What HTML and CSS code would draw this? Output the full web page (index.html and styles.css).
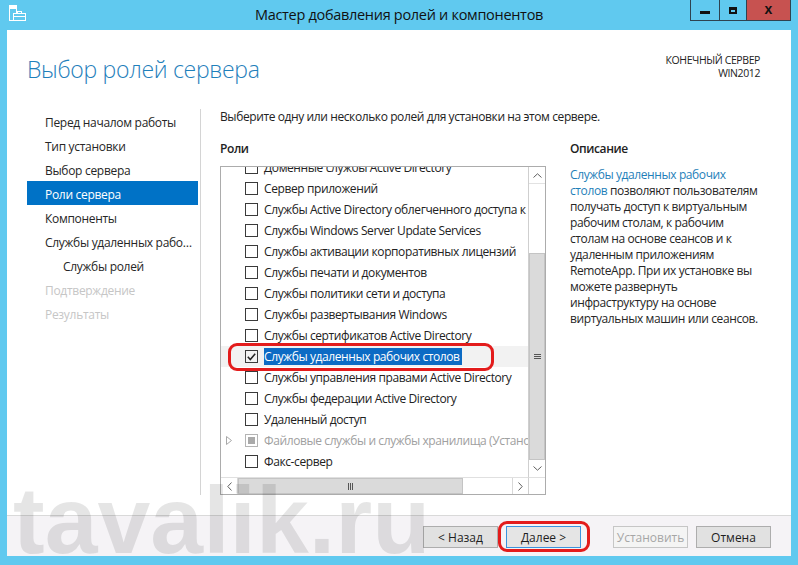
FILE: index.html
```html
<!DOCTYPE html>
<html>
<head>
    <meta charset="utf-8">
    <link rel="stylesheet" href="styles.css">
</head>
<body>
    <div class="window">
        <div class="titlebar">
            <svg class="app-icon" width="17" height="17" viewBox="0 0 17 17">
                <rect x="0.5" y="0.5" width="7" height="15" fill="none" stroke="#fff"/>
                <rect x="1" y="1" width="6" height="3" fill="#fff"/>
                <rect x="4.5" y="8.5" width="12" height="7" fill="#60c9ef" stroke="#fff"/>
                <rect x="8.5" y="6.5" width="4" height="2" fill="none" stroke="#fff"/>
                <line x1="4.5" y1="11.5" x2="16.5" y2="11.5" stroke="#fff"/>
            </svg>
            <div class="title">Мастер добавления ролей и компонентов</div>
            <div class="winbtns">
                <span class="wb wb-min"><i></i></span>
                <span class="wb wb-max"><i></i></span>
                <span class="wb wb-close">x</span>
            </div>
        </div>

        <div class="content">
            <div class="header">
                <h1>Выбор ролей сервера</h1>
                <div class="target">КОНЕЧНЫЙ СЕРВЕР<br>WIN2012</div>
            </div>

            <div class="body">
                <ul class="nav">
                    <li>Перед началом работы</li>
                    <li>Тип установки</li>
                    <li>Выбор сервера</li>
                    <li class="active">Роли сервера</li>
                    <li>Компоненты</li>
                    <li>Службы удаленных рабочих столов</li>
                    <li class="sub">Службы ролей</li>
                    <li class="off">Подтверждение</li>
                    <li class="off">Результаты</li>
                </ul>

                <div class="main">
                    <p class="intro">Выберите одну или несколько ролей для установки на этом сервере.</p>
                    <div class="columns">
                        <div class="roles">
                            <h2>Роли</h2>
                            <div class="listbox">
                                <div class="items">
                                    <div class="inner">
                                        <div class="row"><span class="exp"></span><span class="cb"></span><span class="label">Доменные службы Active Directory</span></div>
                                        <div class="row"><span class="exp"></span><span class="cb"></span><span class="label">Сервер приложений</span></div>
                                        <div class="row"><span class="exp"></span><span class="cb"></span><span class="label">Службы Active Directory облегченного доступа к каталогам</span></div>
                                        <div class="row"><span class="exp"></span><span class="cb"></span><span class="label">Службы Windows Server Update Services</span></div>
                                        <div class="row"><span class="exp"></span><span class="cb"></span><span class="label">Службы активации корпоративных лицензий</span></div>
                                        <div class="row"><span class="exp"></span><span class="cb"></span><span class="label">Службы печати и документов</span></div>
                                        <div class="row"><span class="exp"></span><span class="cb"></span><span class="label">Службы политики сети и доступа</span></div>
                                        <div class="row"><span class="exp"></span><span class="cb"></span><span class="label">Службы развертывания Windows</span></div>
                                        <div class="row"><span class="exp"></span><span class="cb"></span><span class="label">Службы сертификатов Active Directory</span></div>
                                        <div class="row sel"><span class="exp"></span><span class="cb"><svg width="9" height="8" viewBox="0 0 9 8"><polyline points="0.8,3.8 3.3,6.6 8.2,0.8" fill="none" stroke="#222" stroke-width="1.5"/></svg></span><span class="label">Службы удаленных рабочих столов</span></div>
                                        <div class="row"><span class="exp"></span><span class="cb"></span><span class="label">Службы управления правами Active Directory</span></div>
                                        <div class="row"><span class="exp"></span><span class="cb"></span><span class="label">Службы федерации Active Directory</span></div>
                                        <div class="row"><span class="exp"></span><span class="cb"></span><span class="label">Удаленный доступ</span></div>
                                        <div class="row dim"><span class="exp"><svg width="6" height="9" viewBox="0 0 6 9"><polygon points="0.5,0.5 5.5,4.5 0.5,8.5" fill="none" stroke="#a8a8a8"/></svg></span><span class="cb part"></span><span class="label">Файловые службы и службы хранилища (Установлено 1 из 12)</span></div>
                                        <div class="row"><span class="exp"></span><span class="cb"></span><span class="label">Факс-сервер</span></div>
                                    </div>
                                </div>
                                <div class="vscroll">
                                    <span class="arrow"><svg width="9" height="5" viewBox="0 0 9 5"><polyline points="0.5,4.5 4.5,0.8 8.5,4.5" fill="none" stroke="#606060"/></svg></span>
                                    <span class="vthumb"><svg width="7" height="5" viewBox="0 0 7 5"><path d="M0 0.5H7M0 2.5H7M0 4.5H7" stroke="#555"/></svg></span>
                                    <span class="arrow"><svg width="9" height="5" viewBox="0 0 9 5"><polyline points="0.5,0.5 4.5,4.2 8.5,0.5" fill="none" stroke="#606060"/></svg></span>
                                </div>
                                <div class="hscroll">
                                    <span class="arrow"><svg width="5" height="9" viewBox="0 0 5 9"><polyline points="4.5,0.5 0.8,4.5 4.5,8.5" fill="none" stroke="#606060"/></svg></span>
                                    <span class="hthumb"><svg width="5" height="7" viewBox="0 0 5 7"><path d="M0.5 0V7M2.5 0V7M4.5 0V7" stroke="#555"/></svg></span>
                                    <span class="track"></span>
                                    <span class="arrow"><svg width="5" height="9" viewBox="0 0 5 9"><polyline points="0.5,0.5 4.2,4.5 0.5,8.5" fill="none" stroke="#606060"/></svg></span>
                                </div>
                                <div class="corner"></div>
                            </div>
                        </div>
                        <div class="desc">
                            <h2>Описание</h2>
                            <p><span class="link">Службы удаленных рабочих<br>столов</span> позволяют пользователям<br>получать доступ к виртуальным<br>рабочим столам, к рабочим<br>столам на основе сеансов и к<br>удаленным приложениям<br>RemoteApp. При их установке вы<br>можете развернуть<br>инфраструктуру на основе<br>виртуальных машин или сеансов.</p>
                        </div>
                    </div>
                </div>
            </div>

            <div class="footer">
                <button class="btn">&lt; Назад</button>
                <button class="btn primary">Далее &gt;</button>
                <button class="btn install" disabled>Установить</button>
                <button class="btn">Отмена</button>
            </div>

            <div class="watermark">tavalik.ru</div>
        </div>
    </div>
</body>
</html>
```

FILE: styles.css
```css
body {
    margin: 0;
    font-family: "Open Sans", "Noto Sans", sans-serif;
    color: #222;
}

.window {
    width: 798px;
    height: 565px;
    box-sizing: border-box;
    padding: 0 7px 9px;
    background: #60c9ef;
    display: flex;
    flex-direction: column;
}

/* title bar */
.titlebar {
    height: 30px;
    flex: none;
    display: grid;
    grid-template-columns: 1fr auto 1fr;
    align-items: start;
}
.app-icon {
    margin: 5px 0 0 2px;
}
.title {
    font-size: 14.5px;
    letter-spacing: -0.3px;
    line-height: 30px;
    color: #111;
}
.winbtns {
    justify-self: end;
    display: flex;
    border: 1px solid #2e4350;
    border-top: none;
}
.wb {
    height: 20px;
    display: flex;
    align-items: center;
    justify-content: center;
}
.wb-min {
    width: 28px;
    border-right: 1px solid #2e4350;
}
.wb-min i {
    width: 10px;
    height: 3px;
    margin-top: 5px;
    background: #111;
}
.wb-max {
    width: 26px;
    border-right: 1px solid #2e4350;
}
.wb-max i {
    width: 8px;
    height: 7px;
    box-sizing: border-box;
    border: 2px solid #111;
    border-top-width: 3px;
}
.wb-close {
    width: 43px;
    background: #c75250;
    font: bold 14px/20px "Liberation Sans", sans-serif;
    color: #111;
    padding-bottom: 3px;
    box-sizing: border-box;
}

/* white area */
.content {
    flex: 1;
    background: #fff;
    position: relative;
    display: flex;
    flex-direction: column;
    overflow: hidden;
}
.header {
    height: 78px;
    flex: none;
    box-sizing: border-box;
    padding: 23px 31px 0 20px;
    display: flex;
    justify-content: space-between;
    align-items: flex-start;
}
h1 {
    margin: 0;
    font-size: 23px;
    font-weight: 300;
    letter-spacing: -0.3px;
    line-height: 32px;
    color: #1f80bb;
}
.target {
    margin-top: 1px;
    font-size: 10.5px;
    letter-spacing: -0.4px;
    line-height: 13px;
    text-align: right;
    color: #222;
}

.body {
    flex: 1;
    display: flex;
    padding: 1px 0 20px;
    min-height: 0;
}

/* steps on the left */
.nav {
    list-style: none;
    margin: 0;
    padding: 0 2px 0 20px;
    width: 194px;
    box-sizing: border-box;
    border-right: 1px solid #d4d4d4;
    font-size: 12px;
    letter-spacing: -0.3px;
}
.nav li {
    height: 24px;
    box-sizing: border-box;
    padding: 2px 0 0 18px;
    line-height: 24px;
    white-space: nowrap;
    overflow: hidden;
    text-overflow: ellipsis;
    color: #262626;
}
.nav li.sub {
    padding-left: 36px;
}
.nav li.active {
    background: #0072c6;
    color: #fff;
}
.nav li.off {
    color: #c6c6c6;
}

.main {
    flex: 1;
    padding-left: 19px;
    font-size: 12px;
    letter-spacing: -0.4px;
}
.intro {
    margin: 0 0 16px;
    line-height: 16px;
}
.columns {
    display: flex;
}
h2 {
    margin: 0;
    font-size: 12px;
    font-weight: 600;
    line-height: 16px;
    color: #222;
}
.roles {
    width: 326px;
}
.roles h2 {
    margin-bottom: 9px;
}

/* roles list */
.listbox {
    width: 326px;
    height: 329px;
    box-sizing: border-box;
    border: 1px solid #acacac;
    display: grid;
    grid-template-columns: 1fr 17px;
    grid-template-rows: 1fr 17px;
}
.items {
    overflow: hidden;
}
.inner {
    margin-top: -10px;
}
.row {
    height: 21px;
    display: flex;
    align-items: center;
    white-space: nowrap;
    position: relative;
}
.exp {
    width: 24px;
    flex: none;
    display: flex;
    padding-left: 5px;
    box-sizing: border-box;
}
.cb {
    width: 13px;
    height: 13px;
    flex: none;
    box-sizing: border-box;
    border: 1px solid #3a3a3a;
    margin-right: 6px;
    display: flex;
    align-items: center;
    justify-content: center;
}
.cb.part {
    border-color: #b4b4b4;
}
.cb.part::before {
    content: "";
    width: 7px;
    height: 7px;
    background: #aaa;
}
.row.dim .label {
    color: #a0a0a0;
}
.row.sel {
    background: #f2f2f2;
}
.row.sel .label {
    background: #0c6bc4;
    color: #fff;
    line-height: 17px;
    padding-right: 2px;
}
.row.sel::after {
    content: "";
    position: absolute;
    left: 7px;
    top: -3px;
    width: 266px;
    height: 28px;
    box-sizing: border-box;
    border: 3px solid #e31c1c;
    border-radius: 9px;
}

.vscroll {
    border-left: 1px solid #cfcfcf;
    display: flex;
    flex-direction: column;
}
.arrow {
    width: 17px;
    height: 17px;
    flex: none;
    display: flex;
    align-items: center;
    justify-content: center;
    box-sizing: border-box;
    background: #fff;
}
.vscroll .arrow {
    width: 16px;
}
.vscroll .arrow:first-child {
    border-bottom: 1px solid #e2e2e2;
}
.vthumb {
    margin-top: auto;
    height: 207px;
    background: #dadada;
    border: 1px solid #c4c4c4;
    box-sizing: border-box;
    display: flex;
    align-items: center;
    justify-content: center;
}
.hscroll {
    display: flex;
    border-top: 1px solid #e0e0e0;
}
.hscroll .arrow {
    height: 16px;
}
.hscroll .arrow:first-child {
    border-right: 1px solid #d8d8d8;
}
.hscroll .arrow:last-child {
    width: 16px;
    border-left: 1px solid #d8d8d8;
}
.hthumb {
    width: 225px;
    background: #dadada;
    border: 1px solid #c4c4c4;
    box-sizing: border-box;
    display: flex;
    align-items: center;
    justify-content: center;
}
.track {
    flex: 1;
}
.corner {
    border-left: 1px solid #cfcfcf;
    border-top: 1px solid #e0e0e0;
}

/* description */
.desc {
    margin-left: 24px;
}
.desc h2 {
    margin-bottom: 10px;
}
.desc p {
    margin: 0;
    line-height: 16px;
    white-space: nowrap;
    color: #262626;
}
.desc .link {
    color: #1f7fb9;
}

/* buttons */
.footer {
    height: 41px;
    flex: none;
    box-sizing: border-box;
    border-top: 1px solid #d9d9d9;
    background: #f5f3f6;
    padding: 10px 20px 0;
    display: flex;
    justify-content: flex-end;
    align-items: flex-start;
    gap: 8px;
}
.btn {
    width: 75px;
    height: 22px;
    box-sizing: border-box;
    border: 1px solid #adadad;
    background: #e1e1e1;
    font-family: "Open Sans", "Noto Sans", sans-serif;
    font-size: 12px;
    color: #1e1e1e;
    padding: 0;
    position: relative;
}
.btn.primary {
    border-color: #3b93dd;
    background: #e5e5e5;
}
.btn.primary::after {
    content: "";
    position: absolute;
    left: -9px;
    right: -10px;
    top: -6px;
    bottom: -5px;
    border: 3px solid #e31c1c;
    border-radius: 9px;
}
.btn.install {
    margin-left: 24px;
    border-color: #c6c6c6;
    background: #f4f4f4;
    color: #a6a6a6;
}

.watermark {
    position: absolute;
    left: 6px;
    top: 443px;
    font: bold 95px/95px "Liberation Sans", Arial, sans-serif;
    color: rgba(0, 0, 0, 0.1);
    pointer-events: none;
    white-space: nowrap;
}
```
